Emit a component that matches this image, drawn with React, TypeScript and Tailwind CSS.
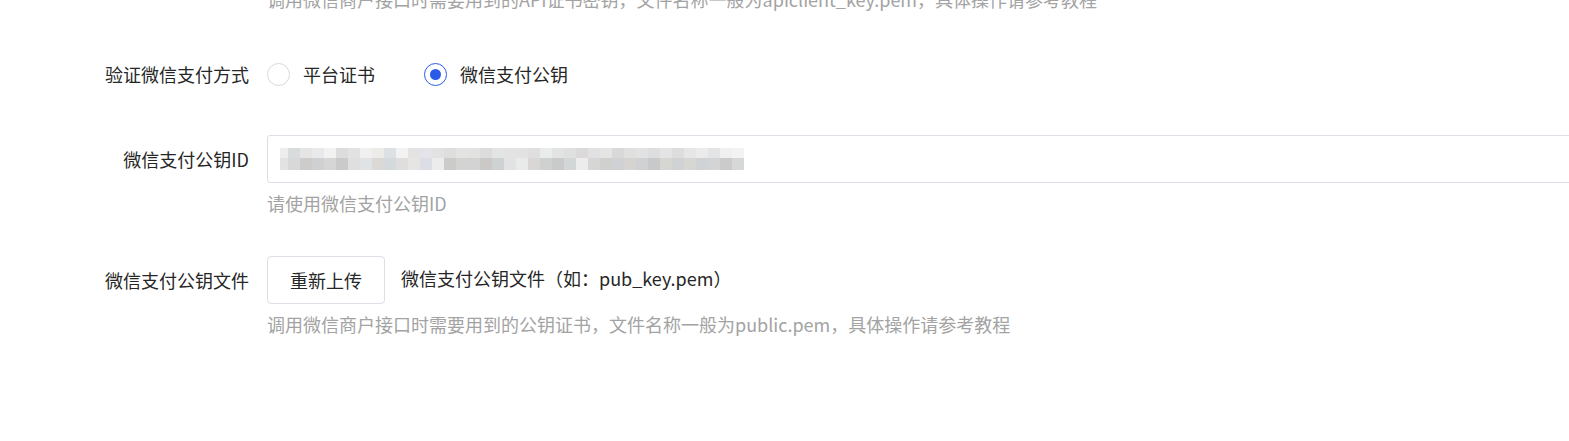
import { useState } from "react";

const topRow = [
  "#ededec", "#d9dcdd", "#e6e4e5", "#e8e9ea", "#f2f2f1", "#dcdcdc", "#e2e2e3", "#f0f0f0", "#edebe7", "#dde1e3",
  "#f2f2f2", "#e5e3e2", "#e3e3e8", "#e2e2e2", "#dfdedc", "#e3e3e3", "#e2e2e0", "#dcdcdc", "#e3e5e4", "#e3e3e3",
  "#e2e2e2", "#dfdfdf", "#e8ecec", "#e3e3e3", "#dee0e0", "#dcd9d9", "#e1e1e3", "#e5e5e4", "#d9d9d9", "#e0e0de",
  "#e2e2e2", "#dddee0", "#e4e4e4", "#dddddd", "#e6e6e6", "#ebebeb", "#e3e4e6", "#f0f0f0", "#f3f3f3",
];
const bottomRow = [
  "#e2e2e2", "#d8d8d8", "#cdcccb", "#cfd0d1", "#d6d6d6", "#cbcacb", "#e0dfde", "#e0e3e6", "#dbd9d5", "#d4d9db",
  "#dedede", "#e7e5e3", "#dcdde5", "#ececec", "#cbcbca", "#d3d3d1", "#d3d3d3", "#cbc9c8", "#ced2d3", "#e2e2e2",
  "#e9ebeb", "#d8d7d6", "#cfd1d1", "#cacaca", "#d3d6d6", "#ececec", "#d6d6d4", "#d0d0cf", "#cfd1d4", "#d6d4d1",
  "#cfd1d3", "#c9c9c9", "#d6d6d3", "#d1d2d4", "#d8d6d3", "#cfd3d5", "#d4d4d4", "#cbcbcb", "#d6d8d8",
];

const Radio = ({ checked, label, onClick }: { checked: boolean; label: string; onClick: () => void }) => (
  <button onClick={onClick} className="flex items-center gap-[13px] cursor-pointer">
    <span
      className={`w-[23px] h-[23px] rounded-full border flex items-center justify-center bg-white ${
        checked ? "border-[#2b5ae8]" : "border-[#d9d9d9]"
      }`}
    >
      {checked && <span className="w-[11px] h-[11px] rounded-full bg-[#2b5ae8]" />}
    </span>
    <span className="text-[18px] leading-[24px] text-[#262626]">{label}</span>
  </button>
);

const Mosaic = () => (
  <div className="flex flex-col">
    <div className="flex">
      {topRow.map((c, i) => (
        <div key={i} className={`${i === 0 ? "w-[8px]" : "w-[12px]"} h-[10px]`} style={{ backgroundColor: c }} />
      ))}
    </div>
    <div className="flex">
      {bottomRow.map((c, i) => (
        <div key={i} className={`${i === 0 ? "w-[8px]" : "w-[12px]"} h-[12px]`} style={{ backgroundColor: c }} />
      ))}
    </div>
  </div>
);

const App = () => {
  const [mode, setMode] = useState("pubkey");

  return (
    <div
      className="w-full h-[441px] overflow-hidden bg-white text-[#262626]"
      style={{ fontFamily: '"Noto Sans CJK SC", "Noto Sans", sans-serif' }}
    >
      <div className="flex -mt-[13px]">
        <div className="w-[249px] shrink-0" />
        <p className="ml-[18px] text-[18px] leading-[24px] text-[#a3a3a3] whitespace-nowrap">
          调用微信商户接口时需要用到的API证书密钥，文件名称一般为apiclient_key.pem，具体操作请参考教程
        </p>
      </div>

      <div className="flex items-center mt-[51px]">
        <label className="w-[249px] shrink-0 text-right text-[18px] leading-[24px]">验证微信支付方式</label>
        <div className="ml-[18px] flex items-center gap-[49px]">
          <Radio checked={mode === "platform"} label="平台证书" onClick={() => setMode("platform")} />
          <Radio checked={mode === "pubkey"} label="微信支付公钥" onClick={() => setMode("pubkey")} />
        </div>
      </div>

      <div className="flex items-start mt-[49px]">
        <label className="w-[249px] shrink-0 text-right text-[18px] leading-[48px]">微信支付公钥ID</label>
        <div className="ml-[18px] flex flex-col">
          <div className="w-[1340px] h-[48px] border border-[#dcdfe6] rounded-[3px] flex items-center pl-[12px]">
            <Mosaic />
          </div>
          <p className="mt-[8px] text-[18px] leading-[24px] text-[#a3a3a3]">请使用微信支付公钥ID</p>
        </div>
      </div>

      <div className="flex items-start mt-[41px]">
        <label className="w-[249px] shrink-0 text-right text-[18px] leading-[48px]">微信支付公钥文件</label>
        <div className="ml-[18px] flex flex-col">
          <div className="flex items-center gap-[16px]">
            <button className="w-[118px] h-[48px] border border-[#dcdfe6] rounded-[4px] bg-white text-[18px] text-[#262626]">
              重新上传
            </button>
            <span className="text-[18px] leading-[24px] -mt-[4px]">微信支付公钥文件（如：pub_key.pem）</span>
          </div>
          <p className="mt-[8px] text-[18px] leading-[24px] text-[#a3a3a3] whitespace-nowrap">
            调用微信商户接口时需要用到的公钥证书，文件名称一般为public.pem，具体操作请参考教程
          </p>
        </div>
      </div>
    </div>
  );
};

export default App;
